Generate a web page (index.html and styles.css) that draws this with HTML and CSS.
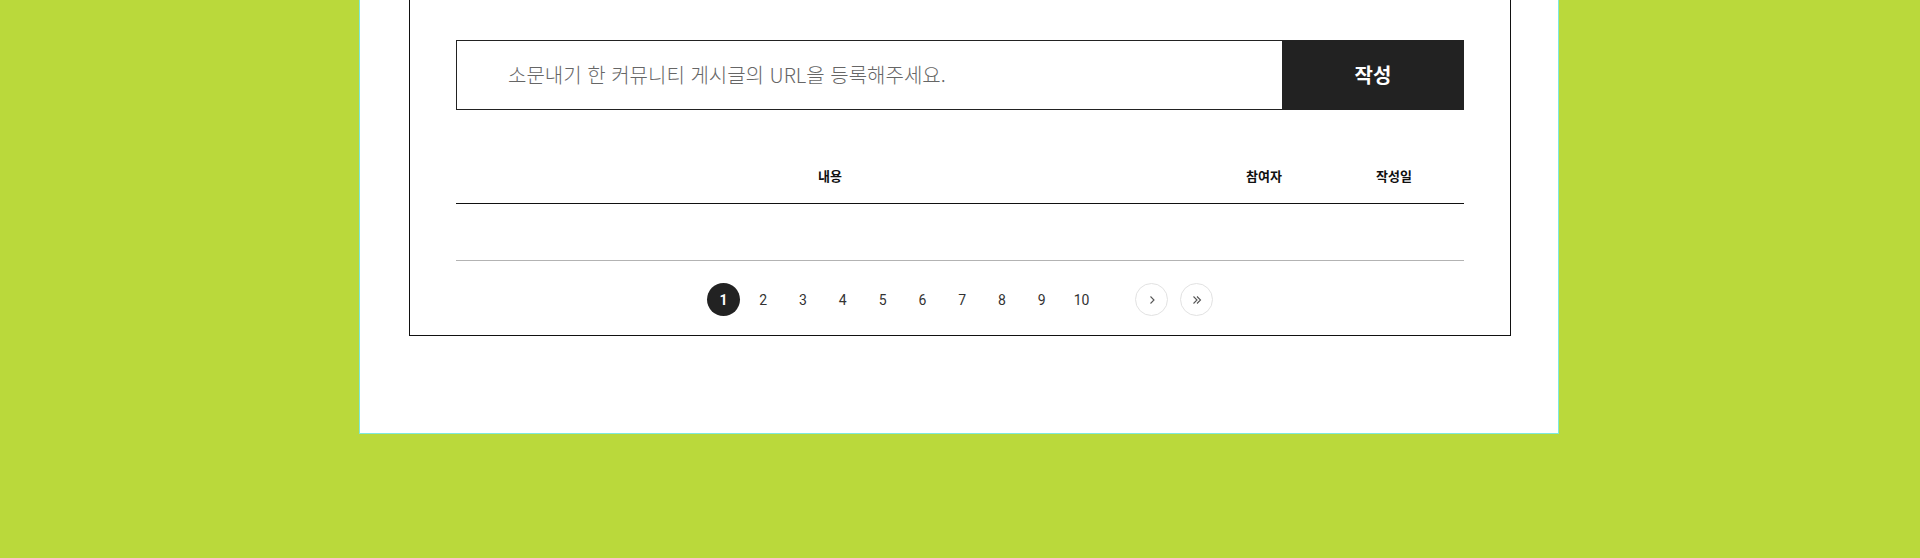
FILE: index.html
```html
<!DOCTYPE html>
<html lang="ko">
<head>
<meta charset="utf-8">
<title>소문내기</title>
<link rel="stylesheet" href="styles.css">
</head>
<body>
<div class="panel">
  <div class="box">
    <form class="write">
      <input class="url" type="text" placeholder="소문내기 한 커뮤니티 게시글의 URL을 등록해주세요.">
      <button class="submit" type="button">작성</button>
    </form>
    <table class="list">
      <thead>
        <tr>
          <th class="c-content">내용</th>
          <th class="c-user">참여자</th>
          <th class="c-date">작성일</th>
        </tr>
      </thead>
      <tbody>
        <tr class="empty"><td colspan="3"></td></tr>
      </tbody>
    </table>
    <nav class="paging">
      <div class="nums">
        <a class="num active">1</a>
        <a class="num">2</a>
        <a class="num">3</a>
        <a class="num">4</a>
        <a class="num">5</a>
        <a class="num">6</a>
        <a class="num">7</a>
        <a class="num">8</a>
        <a class="num">9</a>
        <a class="num">10</a>
      </div>
      <div class="arrows">
        <a class="arr">
          <svg width="10" height="10" viewBox="0 0 10 10"><path d="M3.5 1.5 L7 5 L3.5 8.5" fill="none" stroke="#555" stroke-width="1.1"/></svg>
        </a>
        <a class="arr">
          <svg width="12" height="10" viewBox="0 0 12 10"><path d="M2.5 1.5 L6 5 L2.5 8.5 M6 1.5 L9.5 5 L6 8.5" fill="none" stroke="#555" stroke-width="1.1"/></svg>
        </a>
      </div>
    </nav>
  </div>
</div>
</body>
</html>
```

FILE: styles.css
```css
html, body {
  margin: 0;
  padding: 0;
}
body {
  background: #bad93b;
  height: 558px;
  overflow: hidden;
  font-family: "Noto Sans CJK KR", "Noto Sans", sans-serif;
}
.panel {
  box-sizing: border-box;
  width: 1200px;
  margin-left: 359px;
  background: #fff;
  border: 1px solid #7ee9dc;
  border-top: 0;
  padding: 0 47px 97px 49px;
}
.box {
  box-sizing: border-box;
  width: 1102px;
  border: 1px solid #111;
  border-top: 0;
  padding: 40px 46px 19px;
}
.write {
  display: flex;
  height: 70px;
  margin: 0;
}
.url {
  flex: 1;
  box-sizing: border-box;
  height: 70px;
  border: 1px solid #222;
  border-right: 0;
  padding: 0 0 2px 51px;
  font-family: "Noto Sans CJK KR", sans-serif;
  font-size: 20px;
  font-weight: 300;
  color: #333;
  outline: none;
}
.url::placeholder {
  color: #666;
}
.submit {
  width: 182px;
  height: 70px;
  border: 0;
  background: #222;
  color: #fff;
  font-family: "Noto Sans CJK KR", sans-serif;
  font-size: 20px;
  font-weight: 700;
  padding: 0 0 2px;
}
.list {
  width: 100%;
  border-collapse: separate;
  border-spacing: 0;
  margin-top: 38px;
  table-layout: fixed;
}
.list th {
  box-sizing: content-box;
  height: 55px;
  padding: 0;
  font-size: 13px;
  font-weight: 700;
  color: #111;
  border-bottom: 1px solid #111;
  text-align: center;
  vertical-align: middle;
}
.c-content { width: 748px; }
.c-user { width: 120px; }
.c-date { width: 140px; }
.empty td {
  box-sizing: content-box;
  height: 56px;
  padding: 0;
  border-bottom: 1px solid #b3b3b3;
}
.paging {
  display: flex;
  justify-content: center;
  align-items: center;
  margin-top: 22px;
}
.nums {
  display: flex;
  gap: 6.8px;
}
.num {
  width: 33px;
  height: 33px;
  border-radius: 50%;
  display: flex;
  align-items: center;
  justify-content: center;
  font-family: Roboto, "Noto Sans", sans-serif;
  font-size: 14px;
  color: #333;
}
.num.active {
  background: #222;
  color: #fff;
  font-weight: 700;
}
.arrows {
  display: flex;
  gap: 12px;
  margin-left: 37px;
}
.arr {
  box-sizing: border-box;
  width: 33px;
  height: 33px;
  border-radius: 50%;
  border: 1px solid #e2e2e2;
  display: flex;
  align-items: center;
  justify-content: center;
}
```
